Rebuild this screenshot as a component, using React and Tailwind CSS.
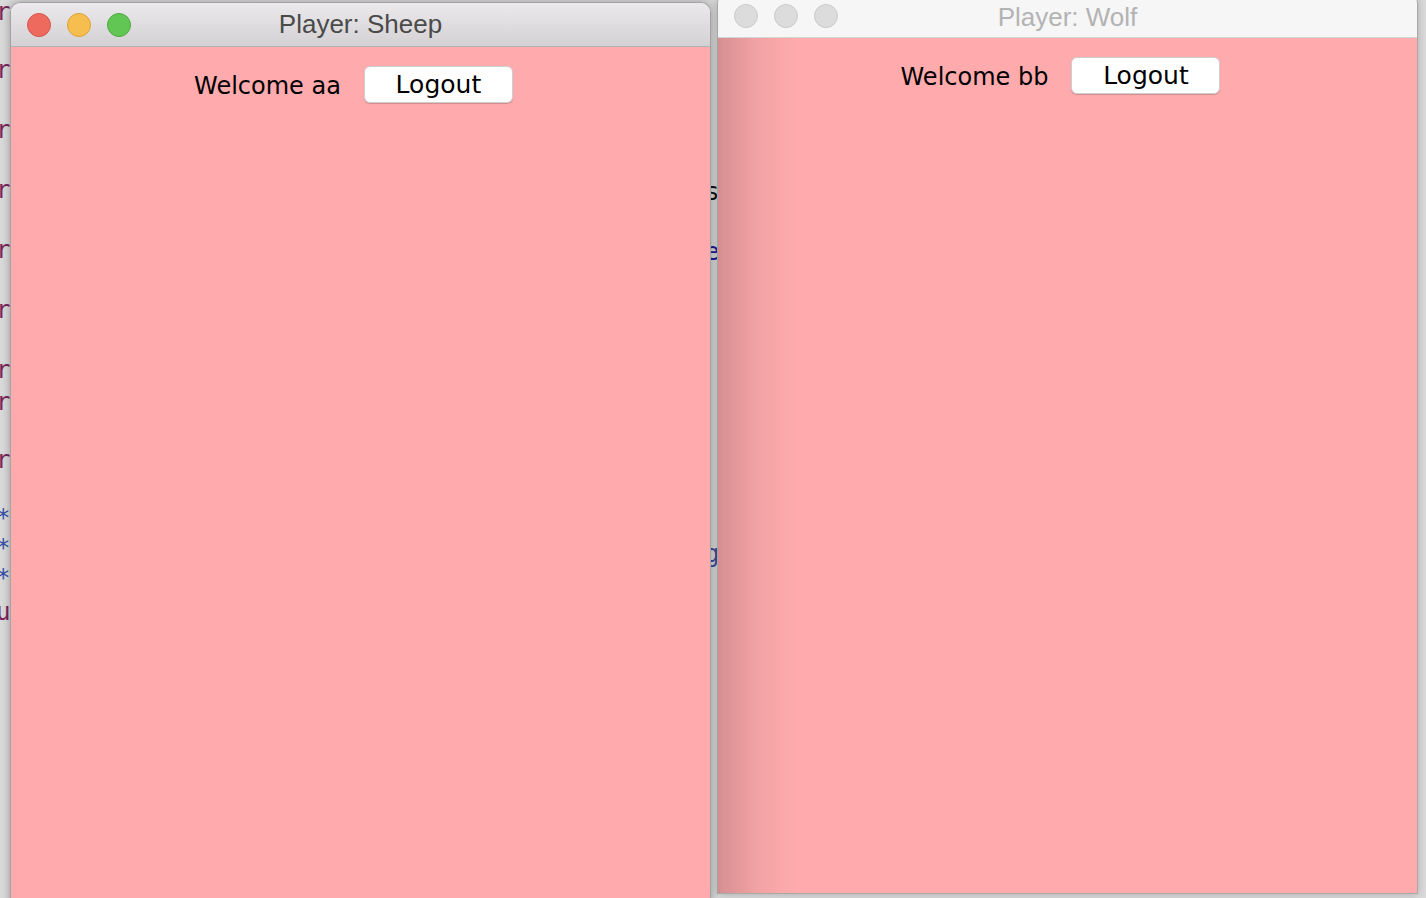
import React from 'react';

const leftLines = [
  { y: -3, ch: 'r', color: 'text-[#7a2459]' },
  { y: 55, ch: 'r', color: 'text-[#7a2459]' },
  { y: 115, ch: 'r', color: 'text-[#7a2459]' },
  { y: 175, ch: 'r', color: 'text-[#7a2459]' },
  { y: 235, ch: 'r', color: 'text-[#7a2459]' },
  { y: 295, ch: 'r', color: 'text-[#7a2459]' },
  { y: 355, ch: 'r', color: 'text-[#7a2459]' },
  { y: 387, ch: 'r', color: 'text-[#7a2459]' },
  { y: 445, ch: 'r', color: 'text-[#7a2459]' },
  { y: 503, ch: '*', color: 'text-[#3650a8]' },
  { y: 533, ch: '*', color: 'text-[#3650a8]' },
  { y: 563, ch: '*', color: 'text-[#3650a8]' },
  { y: 597, ch: 'u', color: 'text-[#7a2459]' },
];

const gapLines = [
  { y: 177, ch: 's', color: 'text-[#111111]' },
  { y: 237, ch: 'e', color: 'text-[#1c1c9a]' },
  { y: 539, ch: 'g', color: 'text-[#3a4c9c]' },
];

function Lights({ active }) {
  if (active) {
    return (
      <div className="flex items-center gap-[16px]">
        <span className="w-[24px] h-[24px] rounded-full bg-[#ee6a5f] border border-[#d5564b]" />
        <span className="w-[24px] h-[24px] rounded-full bg-[#f6be4f] border border-[#dca137]" />
        <span className="w-[24px] h-[24px] rounded-full bg-[#62c655] border border-[#4ea93f]" />
      </div>
    );
  }
  return (
    <div className="flex items-center gap-[16px]">
      <span className="w-[24px] h-[24px] rounded-full bg-[#dcdcdc] border border-[#cbcbcb]" />
      <span className="w-[24px] h-[24px] rounded-full bg-[#dcdcdc] border border-[#cbcbcb]" />
      <span className="w-[24px] h-[24px] rounded-full bg-[#dcdcdc] border border-[#cbcbcb]" />
    </div>
  );
}

function PlayerWindow({ title, user, active, className }) {
  return (
    <div className={`absolute flex flex-col overflow-hidden rounded-t-[10px] ${className}`}>
      <div
        className={`relative h-[44px] shrink-0 flex items-center px-[16px] border-b ${
          active
            ? 'bg-gradient-to-b from-[#ebe9eb] to-[#d3d1d3] border-[#b3b3b3]'
            : 'bg-[#f6f6f6] border-[#d4d4d4]'
        }`}
      >
        <Lights active={active} />
        <div
          className={`absolute inset-0 flex items-center justify-center text-[26px] font-['Liberation_Sans',Arial,sans-serif] ${
            active ? 'text-[#4a4a4a]' : 'text-[#b3b3b3] pt-[3px]'
          }`}
        >
          {title}
        </div>
      </div>
      <div className="relative flex-1 bg-[#ffabad]">
        {!active && (
          <div className="absolute left-0 top-0 bottom-0 w-[80px] bg-gradient-to-r from-[rgba(0,0,0,0.16)] via-[rgba(0,0,0,0.05)] to-transparent pointer-events-none" />
        )}
        <div className="relative flex items-center justify-center gap-[23px] pt-[19px] pr-[14px] font-['DejaVu_Sans',Verdana,sans-serif] text-black">
          <span className="text-[24px] leading-none pt-[3px]">Welcome {user}</span>
          <button className="w-[149px] h-[37px] bg-white rounded-[6px] border border-[#cfcfcf] shadow-[0_1px_1px_rgba(0,0,0,0.18)] text-[25px] leading-none">
            Logout
          </button>
        </div>
      </div>
    </div>
  );
}

export default function App() {
  return (
    <div className="relative w-[1426px] h-[898px] overflow-hidden bg-[#dadada]">
      {/* editor text peeking out behind the windows */}
      <div className="absolute inset-0 font-['DejaVu_Sans_Mono',monospace] text-[24px] leading-[30px]">
        {leftLines.map((l, i) => (
          <span key={i} className={`absolute left-[-4px] ${l.color}`} style={{ top: l.y }}>
            {l.ch}
          </span>
        ))}
        {gapLines.map((l, i) => (
          <span key={'g' + i} className={`absolute left-[705px] ${l.color}`} style={{ top: l.y }}>
            {l.ch}
          </span>
        ))}
      </div>

      <PlayerWindow
        title="Player: Wolf"
        user="bb"
        active={false}
        className="left-[717px] top-[-6px] w-[701px] h-[900px] border-x border-b border-[#a9a9a9] shadow-[0_0_8px_rgba(0,0,0,0.22)]"
      />
      <PlayerWindow
        title="Player: Sheep"
        user="aa"
        active={true}
        className="left-[10px] top-[2px] w-[701px] h-[920px] border-x border-t border-[#a3a3a3] shadow-[0_0_10px_rgba(0,0,0,0.3)]"
      />
    </div>
  );
}
